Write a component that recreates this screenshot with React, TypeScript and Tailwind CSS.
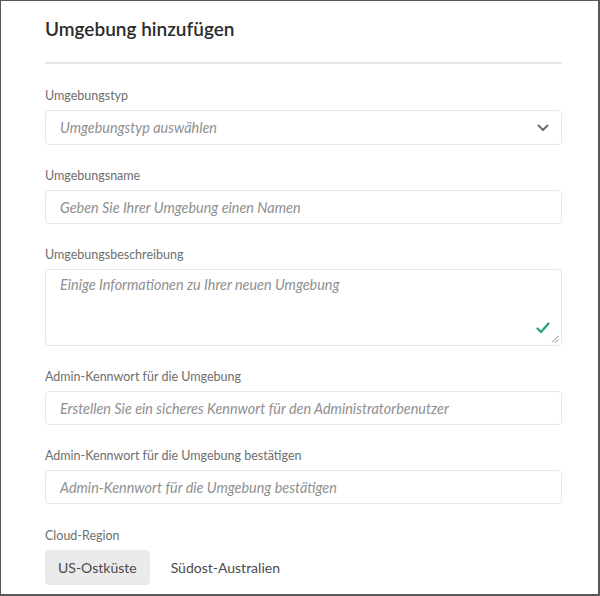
import { useState } from "react";

const fieldLabel = "block text-[12.5px] leading-[18px] text-[#6e6e6e] mb-[5px]";
const inputBox =
  "w-full h-[34px] rounded-[4px] border border-[#e8e8e8] bg-white px-[14px] text-[14.4px] italic text-[#2c2c2c] placeholder:text-[#909090] outline-none";

export default function App() {
  const [region, setRegion] = useState("us");

  return (
    <div className="w-[600px] h-[596px] bg-white border-l border-t border-r-2 border-b-2 border-[#585858] overflow-hidden font-['Lato',sans-serif]">
      <div className="pl-[44px] pr-[36px] pt-[14px]">
        <h1 className="text-[19px] leading-[28px] font-semibold text-[#2c2c2c]">Umgebung hinzufügen</h1>
        <div className="mt-[19px] h-[2px] bg-[#e6e6e6]" />

        <div className="mt-[23px] flex flex-col gap-[22px]">
          <div>
            <label className={fieldLabel}>Umgebungstyp</label>
            <div className="w-full h-[35px] rounded-[4px] border border-[#e8e8e8] bg-white px-[14px] flex items-center justify-between">
              <span className="text-[14.4px] italic text-[#909090]">Umgebungstyp auswählen</span>
              <svg width="12" height="8" viewBox="0 0 12 8" className="mr-[-2px]">
                <path d="M1.5 1.5 L6 6 L10.5 1.5" fill="none" stroke="#6e6e6e" strokeWidth="2" strokeLinecap="round" strokeLinejoin="round" />
              </svg>
            </div>
          </div>

          <div>
            <label className={fieldLabel}>Umgebungsname</label>
            <input className={inputBox} placeholder="Geben Sie Ihrer Umgebung einen Namen" />
          </div>

          <div>
            <label className={fieldLabel}>Umgebungsbeschreibung</label>
            <div className="relative">
              <textarea
                className="block w-full h-[77px] rounded-[4px] border border-[#e8e8e8] bg-white px-[14px] py-[4px] text-[14.4px] italic text-[#2c2c2c] placeholder:text-[#909090] outline-none resize-none"
                placeholder="Einige Informationen zu Ihrer neuen Umgebung"
              />
              <svg width="14" height="12" viewBox="0 0 14 12" className="absolute right-[12px] bottom-[12px]">
                <path d="M1.5 6.5 L5 10 L12.5 1.5" fill="none" stroke="#2d9d78" strokeWidth="2.2" strokeLinecap="round" strokeLinejoin="round" />
              </svg>
              <svg width="8" height="8" viewBox="0 0 8 8" className="absolute right-[3px] bottom-[3px]">
                <path d="M7.5 1 L1 7.5 M7.5 4.5 L4.5 7.5" stroke="#8a8a8a" strokeWidth="1" />
              </svg>
            </div>
          </div>

          <div>
            <label className={fieldLabel}>Admin-Kennwort für die Umgebung</label>
            <input className={inputBox} type="password" placeholder="Erstellen Sie ein sicheres Kennwort für den Administratorbenutzer" />
          </div>

          <div>
            <label className={fieldLabel}>Admin-Kennwort für die Umgebung bestätigen</label>
            <input className={inputBox} type="password" placeholder="Admin-Kennwort für die Umgebung bestätigen" />
          </div>

          <div className="mt-[1px]">
            <label className={fieldLabel}>Cloud-Region</label>
            <div className="flex gap-[8px]">
              <button
                onClick={() => setRegion("us")}
                className={`h-[35px] px-[13px] rounded-[4px] text-[14px] text-[#4b4b4b] ${region === "us" ? "bg-[#eaeaea]" : ""}`}
              >
                US-Ostküste
              </button>
              <button
                onClick={() => setRegion("au")}
                className={`h-[35px] px-[13px] rounded-[4px] text-[14px] text-[#4b4b4b] ${region === "au" ? "bg-[#eaeaea]" : ""}`}
              >
                Südost-Australien
              </button>
            </div>
          </div>
        </div>
      </div>
    </div>
  );
}
